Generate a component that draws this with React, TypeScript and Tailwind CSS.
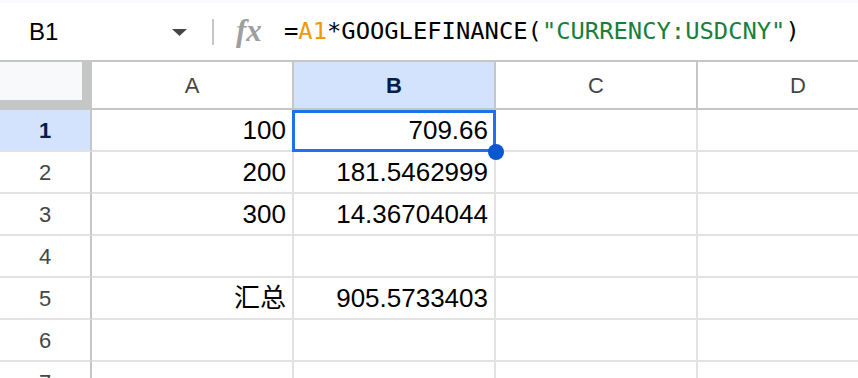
import React from "react";

const COLS = ["A", "B", "C", "D"];

const ROWS: { a: string; b: string }[] = [
  { a: "100", b: "709.66" },
  { a: "200", b: "181.5462999" },
  { a: "300", b: "14.36704044" },
  { a: "", b: "" },
  { a: "汇总", b: "905.5733403" },
  { a: "", b: "" },
  { a: "", b: "" },
];

const cellFont = { fontFamily: '"Liberation Sans", "Noto Sans CJK SC", Arial, sans-serif' };

export default function App() {
  return (
    <div className="w-[858px] h-[378px] overflow-hidden bg-white text-black" style={cellFont}>
      {/* top strip */}
      <div className="h-[3px] bg-[#f8fafd]" />

      {/* formula bar */}
      <div className="h-[57px] flex items-center border-b-2 border-[#c4c7c5] box-content">
        <div className="w-[172px] pl-[29px] text-[24px] leading-none">B1</div>
        <svg width="15" height="7" viewBox="0 0 15 7" className="mt-[1px]">
          <path d="M0 0 L15 0 L7.5 7 Z" fill="#444746" />
        </svg>
        <div className="ml-[25px] w-[2px] h-[26px] bg-[#c4c7c5]" />
        <div
          className="ml-[22px] w-[26px] text-[31px] leading-none italic font-bold text-[#9e9e9e] -mt-[3px]"
          style={{ fontFamily: '"Liberation Serif", "DejaVu Serif", serif' }}
        >
          fx
        </div>
        <div
          className="ml-[22px] text-[23.8px] leading-none whitespace-nowrap"
          style={{ fontFamily: '"DejaVu Sans Mono", "Liberation Mono", monospace' }}
        >
          =<span className="text-[#f29900]">A1</span>*GOOGLEFINANCE(
          <span className="text-[#188038]">"CURRENCY:USDCNY"</span>)
        </div>
      </div>

      {/* grid */}
      <div className="relative w-[900px]">
        <div className="grid grid-cols-[92px_202px_202px_202px_202px]">
          {/* corner */}
          <div className="h-[48px] bg-[#c4c7c5]">
            <div className="w-[82px] h-[38px] bg-[#f8f9fa]" />
          </div>
          {COLS.map((c) => (
            <div
              key={c}
              className={`h-[48px] flex items-center justify-center text-[22px] border-b-2 border-r-2 border-[#c4c7c5] ${
                c === "B" ? "bg-[#d3e3fd] text-[#041e49] font-bold" : "bg-white text-[#444746]"
              }`}
            >
              {c}
            </div>
          ))}

          {ROWS.map((r, i) => {
            const sel = i === 0;
            return (
              <React.Fragment key={i}>
                <div
                  className={`h-[42px] flex items-center justify-center text-[22px] border-r-2 border-r-[#c4c7c5] border-b-2 border-b-[#e1e3e1] ${
                    sel ? "bg-[#d3e3fd] text-[#041e49] font-bold" : "bg-white text-[#444746]"
                  }`}
                >
                  {i + 1}
                </div>
                <div className="h-[42px] flex items-center justify-end pr-[6px] text-[26px] border-r-2 border-b-2 border-[#e1e3e1]">
                  {r.a}
                </div>
                <div className="h-[42px] flex items-center justify-end pr-[6px] text-[26px] border-r-2 border-b-2 border-[#e1e3e1]">
                  {r.b}
                </div>
                <div className="h-[42px] border-r-2 border-b-2 border-[#e1e3e1]" />
                <div className="h-[42px] border-r-2 border-b-2 border-[#e1e3e1]" />
              </React.Fragment>
            );
          })}
        </div>

        {/* selection */}
        <div className="absolute left-[292px] top-[48px] w-[204px] h-[42px] border-[3px] border-[#1a73e8]" />
        <div className="absolute left-[488px] top-[82px] w-[16px] h-[16px] rounded-full bg-[#0b57d0]" />
      </div>
    </div>
  );
}
